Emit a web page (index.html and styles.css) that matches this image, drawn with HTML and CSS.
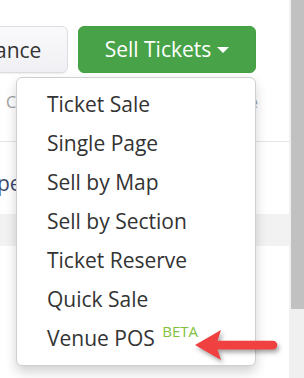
FILE: index.html
```html
<!DOCTYPE html>
<html>
<head>
<meta charset="utf-8">
<link rel="stylesheet" href="styles.css">
</head>
<body>
<div class="page">
  <div class="main">
    <div class="toolbar">
      <button class="btn btn-default">ance</button>
      <button class="btn btn-green">Sell Tickets <span class="caret"></span></button>
    </div>
    <div class="tabs">
      <span class="tab">C</span>
      <span class="tab">e</span>
    </div>
    <div class="content-row">pe</div>
    <div class="band"></div>

    <ul class="dropdown">
      <li>Ticket Sale</li>
      <li>Single Page</li>
      <li>Sell by Map</li>
      <li>Sell by Section</li>
      <li>Ticket Reserve</li>
      <li>Quick Sale</li>
      <li>Venue POS <span class="beta">BETA</span></li>
    </ul>

    <svg class="arrow" width="100" height="44" viewBox="185 322 100 44">
      <path d="M195 345 L221 330 L217.5 340.8 L273 340.8 A4.3 4.3 0 0 1 273 349.4 L217.5 349.4 L221 360 Z" fill="#f0403f"/>
    </svg>
  </div>
  <div class="scrollbar"><div class="thumb"></div></div>
</div>
</body>
</html>
```

FILE: styles.css
```css
* { box-sizing: border-box; }
html, body { margin: 0; padding: 0; }
body {
  font-family: "Open Sans", "Liberation Sans", sans-serif;
  background: #fff;
  width: 304px;
  height: 378px;
  overflow: hidden;
}
.page {
  display: flex;
  width: 304px;
  height: 378px;
}
.main {
  position: relative;
  flex: 1;
  overflow: hidden;
}
.toolbar {
  display: flex;
  gap: 10px;
  padding-top: 26px;
}
.btn {
  font-family: inherit;
  font-size: 21px;
  height: 47px;
  border-radius: 6px;
  display: flex;
  align-items: center;
  margin: 0;
}
.btn-default {
  margin-left: -14px;
  width: 82px;
  padding: 0 0 0 8px;
  color: #333;
  background: linear-gradient(#fafafc, #f0f0f4);
  border: 1px solid #dcdce2;
  box-shadow: 0 1px 1px rgba(0,0,0,.06);
}
.btn-green {
  width: 178px;
  justify-content: center;
  padding: 0 0 2px 0;
  color: #fff;
  background: #48a348;
  border: 1px solid #43a043;
  gap: 6px;
}
.caret {
  width: 0;
  height: 0;
  border-left: 6px solid transparent;
  border-right: 6px solid transparent;
  border-top: 6px solid #fff;
  margin-top: 3px;
}
.tabs {
  display: flex;
  justify-content: space-between;
  height: 69px;
  padding: 19px 31px 0 6px;
  border-bottom: 1px solid #e4e4e4;
  font-size: 16px;
  line-height: 20px;
  color: #a0a0a0;
}
.content-row {
  height: 72px;
  padding-top: 29px;
  font-size: 21px;
  line-height: 24px;
  color: #3c4a6c;
  margin-left: -3px;
}
.band {
  height: 32px;
  background: #f2f2f2;
}
.dropdown {
  position: absolute;
  left: 16px;
  top: 77px;
  width: 240px;
  height: 289px;
  margin: 0;
  padding: 7px 0;
  list-style: none;
  background: #fff;
  border: 1px solid #cfcfcf;
  border-radius: 6px;
  box-shadow: 0 6px 12px rgba(0,0,0,.18);
}
.dropdown li {
  font-size: 21px;
  line-height: 39px;
  height: 39px;
  padding-left: 30px;
  color: #333;
  white-space: nowrap;
}
.beta {
  font-size: 15px;
  line-height: 1;
  vertical-align: 9px;
  color: #80c23c;
  margin-left: 2px;
}
.arrow {
  position: absolute;
  left: 185px;
  top: 322px;
  filter: drop-shadow(2px 3px 2px rgba(0,0,0,.35));
}
.scrollbar {
  width: 15px;
  height: 378px;
  background: #f0f0f0;
  padding-left: 2px;
}
.thumb {
  height: 309px;
  background: #c1c1c1;
}
```
